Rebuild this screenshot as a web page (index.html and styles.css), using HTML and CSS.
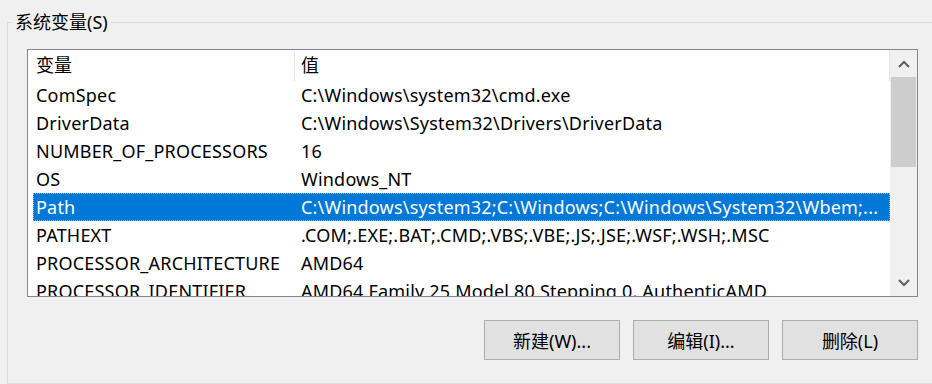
FILE: index.html
```html
<!DOCTYPE html>
<html lang="zh-CN">
<head>
    <meta charset="UTF-8">
    <title>系统变量</title>
    <link rel="stylesheet" href="styles.css">
</head>
<body>
    <div class="group">
        <span class="group-title">系统变量(S)</span>

        <div class="listbox">
            <div class="list">
                <div class="list-head">
                    <div class="head-col name">变量</div>
                    <div class="head-col value">值</div>
                </div>
                <div class="rows">
                    <div class="row"><span class="cell name">ComSpec</span><span class="cell value">C:\Windows\system32\cmd.exe</span></div>
                    <div class="row"><span class="cell name">DriverData</span><span class="cell value">C:\Windows\System32\Drivers\DriverData</span></div>
                    <div class="row"><span class="cell name">NUMBER_OF_PROCESSORS</span><span class="cell value">16</span></div>
                    <div class="row"><span class="cell name">OS</span><span class="cell value">Windows_NT</span></div>
                    <div class="row selected"><span class="cell name">Path</span><span class="cell value">C:\Windows\system32;C:\Windows;C:\Windows\System32\Wbem;...</span></div>
                    <div class="row"><span class="cell name">PATHEXT</span><span class="cell value">.COM;.EXE;.BAT;.CMD;.VBS;.VBE;.JS;.JSE;.WSF;.WSH;.MSC</span></div>
                    <div class="row"><span class="cell name">PROCESSOR_ARCHITECTURE</span><span class="cell value">AMD64</span></div>
                    <div class="row"><span class="cell name">PROCESSOR_IDENTIFIER</span><span class="cell value">AMD64 Family 25 Model 80 Stepping 0, AuthenticAMD</span></div>
                </div>
            </div>

            <!-- vertical scrollbar -->
            <div class="scrollbar">
                <div class="sb-btn">
                    <svg width="12" height="8" viewBox="0 0 12 8"><path d="M1 7 L6 2 L11 7" fill="none" stroke="#606060" stroke-width="2"/></svg>
                </div>
                <div class="sb-track">
                    <div class="sb-thumb"></div>
                </div>
                <div class="sb-btn">
                    <svg width="12" height="8" viewBox="0 0 12 8"><path d="M1 1 L6 6 L11 1" fill="none" stroke="#606060" stroke-width="2"/></svg>
                </div>
            </div>
        </div>

        <div class="buttons">
            <button class="btn">新建(W)...</button>
            <button class="btn">编辑(I)...</button>
            <button class="btn">删除(L)</button>
        </div>
    </div>
</body>
</html>
```

FILE: styles.css
```css
/* dialog base */
body {
    margin: 0;
    width: 932px;
    height: 384px;
    overflow: hidden;
    background-color: #f0f0f0;
    font-family: "Noto Sans", "Noto Sans CJK SC", sans-serif;
    font-size: 18px;
    color: #000;
}

.group {
    position: relative;
    box-sizing: border-box;
    width: 960px;
    height: 362px;
    margin: 22px 0 0 7px;
    padding: 26px 0 0 19px;
    border: 1px solid #dcdcdc;
}

.group-title {
    position: absolute;
    top: -14px;
    left: 4px;
    padding: 0 3px;
    background-color: #f0f0f0;
    line-height: 26px;
}

.listbox {
    display: flex;
    box-sizing: border-box;
    width: 891px;
    height: 248px;
    border: 1px solid #828790;
    background-color: #fff;
}

.list {
    flex: 1;
    overflow: hidden;
}

.list-head {
    display: flex;
    height: 31px;
    border-right: 1px solid #e5e5e5;
}

.head-col {
    line-height: 30px;
    white-space: nowrap;
}

.head-col.name {
    box-sizing: border-box;
    width: 267px;
    padding-left: 8px;
    margin: 1px 0 0;
    border-right: 1px solid #e5e5e5;
    line-height: 28px;
}

.head-col.value {
    padding-left: 6px;
}

.row {
    display: flex;
    height: 28px;
    margin-left: 5px;
    line-height: 28px;
    white-space: nowrap;
    letter-spacing: 0.2px;
}

.cell {
    overflow: hidden;
}

.cell.name {
    width: 262px;
    padding-left: 3px;
    box-sizing: border-box;
}

.cell.value {
    padding-left: 6px;
}

.row.selected {
    background-color: #0078d7;
    color: #fff;
    outline: 1px dotted #f0a040;
    outline-offset: -1px;
}

.scrollbar {
    display: flex;
    flex-direction: column;
    width: 27px;
    background-color: #f0f0f0;
}

.sb-btn {
    display: flex;
    align-items: center;
    justify-content: center;
    height: 27px;
}

.sb-track {
    flex: 1;
    padding: 0 1px;
}

.sb-thumb {
    height: 90px;
    background-color: #cdcdcd;
}

.buttons {
    display: flex;
    gap: 13px;
    width: 891px;
    justify-content: flex-end;
    margin-top: 23px;
}

.btn {
    width: 136px;
    height: 40px;
    border: 1px solid #adadad;
    background-color: #e1e1e1;
    font-family: inherit;
    font-size: 18px;
    color: #000;
    padding: 0;
}
```
